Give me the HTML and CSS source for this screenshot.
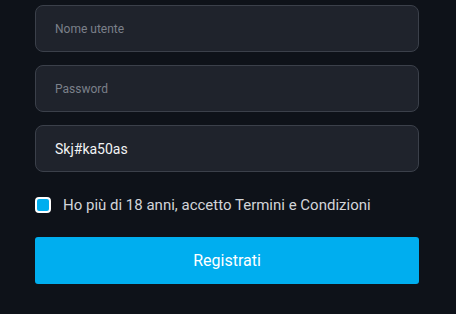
FILE: index.html
```html
<!DOCTYPE html>
<html lang="it">
<head>
    <meta charset="UTF-8">
    <meta name="viewport" content="width=device-width, initial-scale=1.0">
    <title>Registrati</title>
    <link rel="stylesheet" href="styles.css">
</head>
<body>
    <form class="signup-form">
        <input class="field" type="text" placeholder="Nome utente">
        <input class="field" type="text" placeholder="Password">
        <input class="field filled" type="text" value="Skj#ka50as">
        <label class="terms">
            <span class="check"></span>
            <span>Ho più di 18 anni, accetto Termini e Condizioni</span>
        </label>
        <button type="button" class="submit">Registrati</button>
    </form>
</body>
</html>
```
FILE: styles.css
```css
body {
    margin: 0;
    padding: 0;
    background-color: #0e1219;
    font-family: Roboto, 'Liberation Sans', sans-serif;
}
.signup-form {
    width: 384px;
    margin: 0 0 0 35px;
    padding-top: 5px;
    display: flex;
    flex-direction: column;
}
.field {
    box-sizing: border-box;
    height: 47px;
    margin-bottom: 13px;
    padding: 0 19px;
    background-color: #1f232c;
    border: 1px solid #3b404a;
    border-radius: 8px;
    color: #f2f3f5;
    font-family: inherit;
    font-size: 12px;
    outline: none;
}
.field::placeholder {
    color: #7b808a;
}
.field.filled {
    font-size: 14px;
}
.terms {
    display: flex;
    align-items: center;
    gap: 12px;
    height: 18px;
    margin-top: 11px;
    color: #d3d5d9;
    font-size: 15px;
}
.check {
    box-sizing: border-box;
    width: 16px;
    height: 16px;
    background-color: #00aeef;
    border: 2px solid #ffffff;
    border-radius: 4px;
}
.submit {
    height: 47px;
    margin-top: 23px;
    background-color: #00aeef;
    border: none;
    border-radius: 3px;
    color: #ffffff;
    font-family: inherit;
    font-size: 16px;
}
```
